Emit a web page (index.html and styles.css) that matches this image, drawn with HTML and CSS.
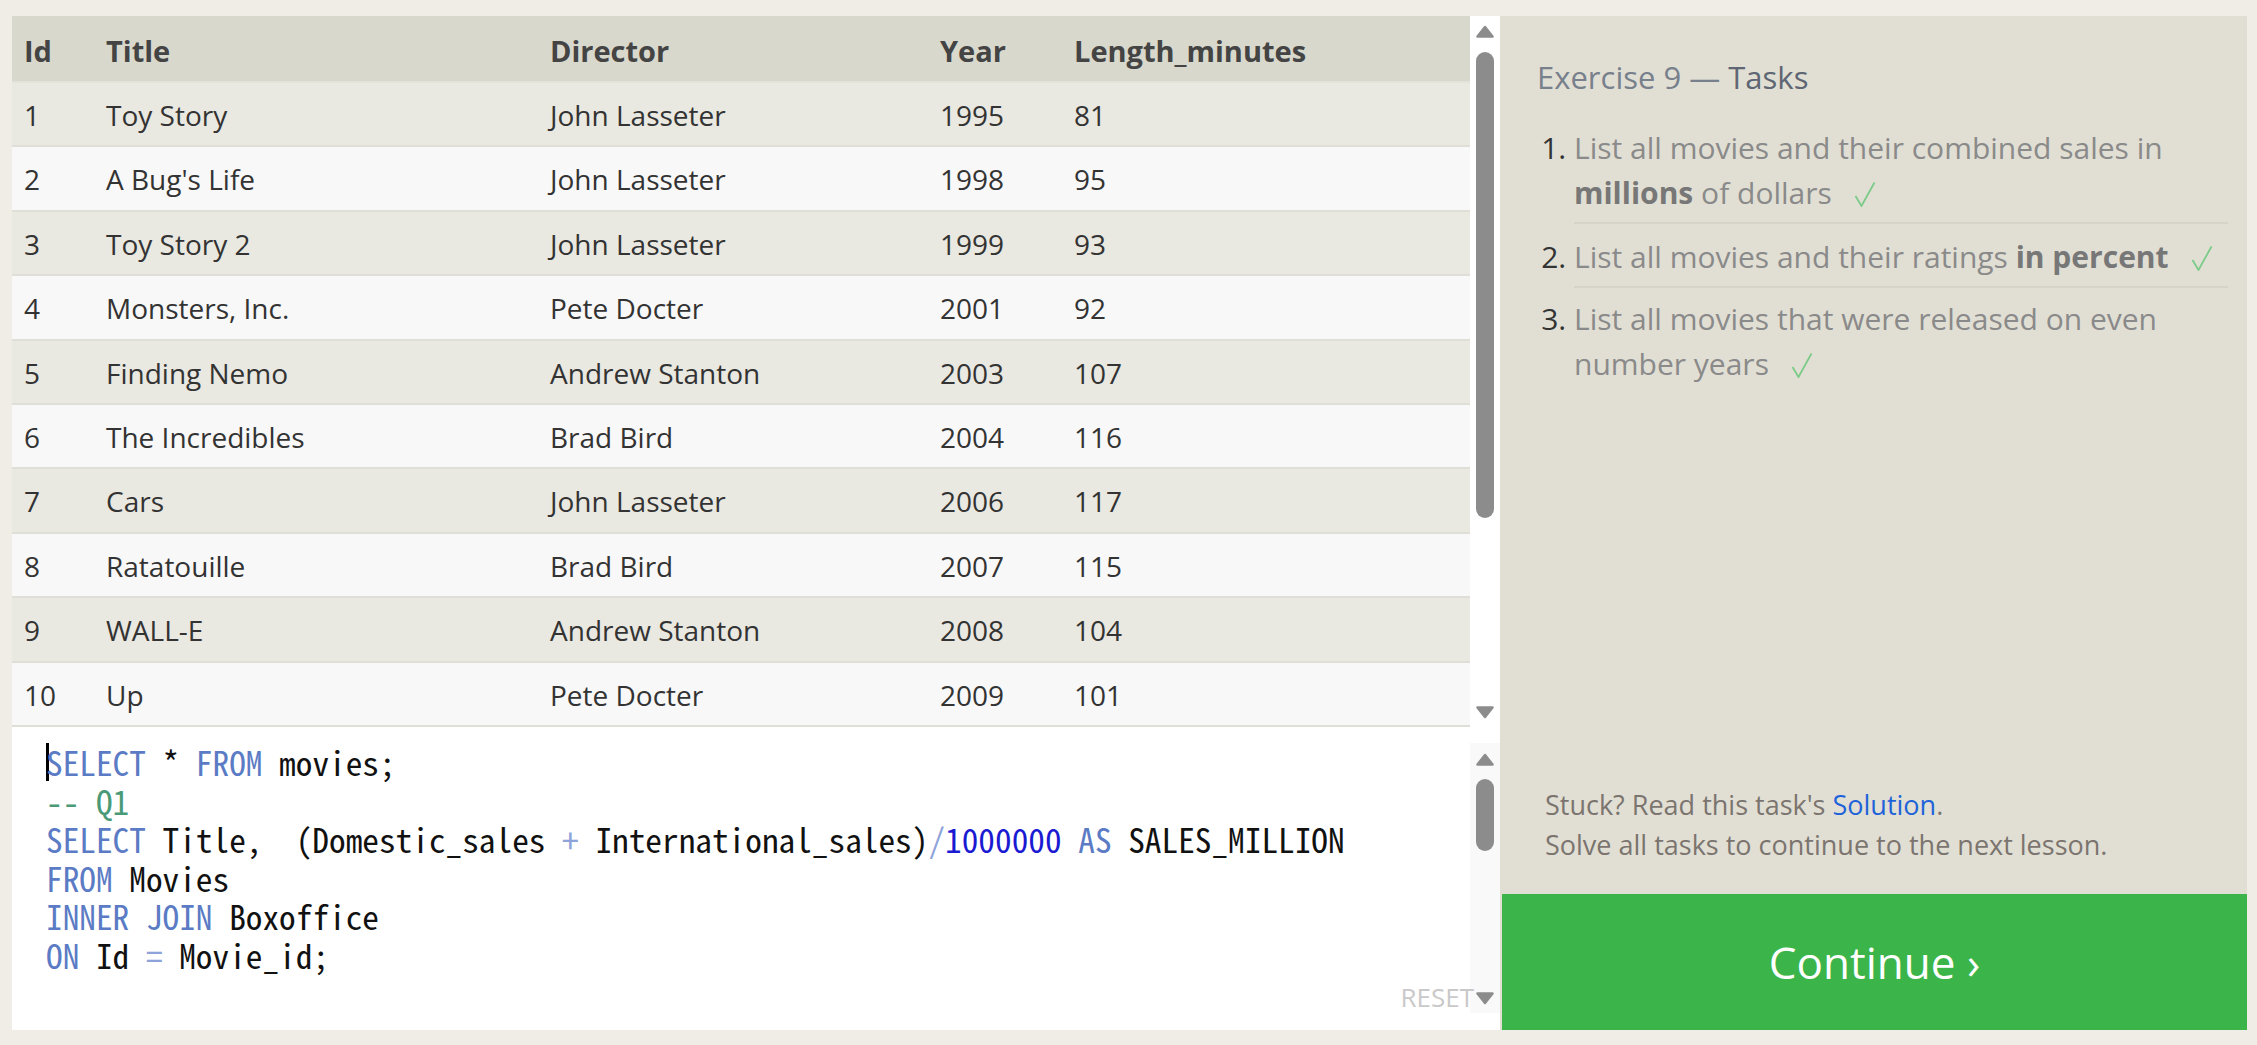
FILE: index.html
```html
<!DOCTYPE html>
<html lang="en">
<head>
<meta charset="utf-8">
<title>SQL Exercise 9 — Tasks</title>
<link rel="stylesheet" href="styles.css">
</head>
<body>
<div class="app">
  <div class="left">
    <div class="results">
      <table class="grid">
        <colgroup>
          <col class="c-id"><col class="c-title"><col class="c-dir"><col class="c-year"><col class="c-len">
        </colgroup>
        <thead>
          <tr><th>Id</th><th>Title</th><th>Director</th><th>Year</th><th>Length_minutes</th></tr>
        </thead>
        <tbody>
          <tr><td>1</td><td>Toy Story</td><td>John Lasseter</td><td>1995</td><td>81</td></tr>
          <tr><td>2</td><td>A Bug's Life</td><td>John Lasseter</td><td>1998</td><td>95</td></tr>
          <tr><td>3</td><td>Toy Story 2</td><td>John Lasseter</td><td>1999</td><td>93</td></tr>
          <tr><td>4</td><td>Monsters, Inc.</td><td>Pete Docter</td><td>2001</td><td>92</td></tr>
          <tr><td>5</td><td>Finding Nemo</td><td>Andrew Stanton</td><td>2003</td><td>107</td></tr>
          <tr><td>6</td><td>The Incredibles</td><td>Brad Bird</td><td>2004</td><td>116</td></tr>
          <tr><td>7</td><td>Cars</td><td>John Lasseter</td><td>2006</td><td>117</td></tr>
          <tr><td>8</td><td>Ratatouille</td><td>Brad Bird</td><td>2007</td><td>115</td></tr>
          <tr><td>9</td><td>WALL-E</td><td>Andrew Stanton</td><td>2008</td><td>104</td></tr>
          <tr><td>10</td><td>Up</td><td>Pete Docter</td><td>2009</td><td>101</td></tr>
        </tbody>
      </table>
      <div class="vscroll results-scroll">
        <svg class="arrow" viewBox="0 0 18 13" width="18" height="13"><path d="M9 2 L16.5 11.5 H1.5 Z"/></svg>
        <div class="thumb results-thumb"></div>
        <div class="spacer"></div>
        <svg class="arrow" viewBox="0 0 18 13" width="18" height="13"><path d="M9 11 L16.5 1.5 H1.5 Z"/></svg>
      </div>
    </div>
    <div class="editor">
<pre class="code"><span class="caret"></span><span class="kw">SELECT</span> * <span class="kw">FROM</span> movies;
<span class="cm">-- Q1</span>
<span class="kw">SELECT</span> Title,  (Domestic_sales <span class="op">+</span> International_sales)<span class="op">/</span><span class="num">1000000</span> <span class="kw">AS</span> SALES_MILLION
<span class="kw">FROM</span> Movies
<span class="kw">INNER</span> <span class="kw">JOIN</span> Boxoffice
<span class="kw">ON</span> Id <span class="op">=</span> Movie_id;</pre>
      <div class="reset">RESET</div>
      <div class="vscroll editor-scroll">
        <svg class="arrow" viewBox="0 0 18 13" width="18" height="13"><path d="M9 2 L16.5 11.5 H1.5 Z"/></svg>
        <div class="thumb editor-thumb"></div>
        <div class="spacer"></div>
        <svg class="arrow" viewBox="0 0 18 13" width="18" height="13"><path d="M9 11 L16.5 1.5 H1.5 Z"/></svg>
      </div>
    </div>
  </div>
  <aside class="panel">
    <div class="tasks">
      <h2 class="heading">Exercise 9 — <span class="heading-strong">Tasks</span></h2>
      <ol class="task-list">
        <li>List all movies and their combined sales in <b>millions</b> of dollars<svg class="check" viewBox="0 0 22 26" width="22" height="26"><path d="M1.5 15 L7.5 25 L20.5 1.5"/></svg></li>
        <li>List all movies and their ratings <b>in percent</b><svg class="check" viewBox="0 0 22 26" width="22" height="26"><path d="M1.5 15 L7.5 25 L20.5 1.5"/></svg></li>
        <li>List all movies that were released on even number years<svg class="check" viewBox="0 0 22 26" width="22" height="26"><path d="M1.5 15 L7.5 25 L20.5 1.5"/></svg></li>
      </ol>
    </div>
    <div class="hint">
      <p>Stuck? Read this task's <a href="#">Solution</a>.</p>
      <p>Solve all tasks to continue to the next lesson.</p>
    </div>
    <div class="continue">Continue ›</div>
  </aside>
</div>
</body>
</html>
```
FILE: styles.css
```css
html, body {
  margin: 0;
  padding: 0;
}

body {
  background: #efede6;
  font-family: "Open Sans", "Noto Sans", sans-serif;
}

.app {
  display: flex;
  box-sizing: border-box;
  height: 1045px;
  padding: 16px 10px 15px 12px;
}

/* ---------- left column ---------- */
.left {
  width: 1488px;
  display: flex;
  flex-direction: column;
}

.results {
  display: flex;
}

.grid {
  width: 1458px;
  border-collapse: collapse;
  table-layout: fixed;
  font-size: 28px;
  color: #333;
}

.c-id { width: 82px; }
.c-title { width: 444px; }
.c-dir { width: 390px; }
.c-year { width: 134px; }
.c-len { width: 408px; }

.grid th {
  background: #d9d8cc;
  color: #444;
  font-size: 29px;
  font-weight: 700;
  text-align: left;
  padding: 5px 0 0 12px;
  line-height: 60px;
  border-bottom: 2px solid #e3e2db;
  white-space: nowrap;
}

.grid td {
  padding: 3px 0 0 12px;
  line-height: 59.4px;
  border-bottom: 2px solid #dfded7;
  white-space: nowrap;
}

.grid tbody tr:nth-child(odd) td { background: #e9e8e1; }
.grid tbody tr:nth-child(even) td { background: #f8f8f8; }

.vscroll {
  width: 30px;
  display: flex;
  flex-direction: column;
  align-items: center;
}

.vscroll .arrow path {
  fill: #8c8c8c;
  stroke: #8c8c8c;
  stroke-width: 2.5;
  stroke-linejoin: round;
}

.spacer { flex: 1; }

.thumb {
  width: 18px;
  border-radius: 9px;
  background: #8c8c8c;
}

.results-scroll {
  background: #fff;
  padding: 9px 0 8px;
}

.results-thumb {
  height: 466px;
  margin-top: 14px;
}

.editor {
  flex: 1;
  display: flex;
  background: #fff;
  position: relative;
}

.code {
  flex: 1;
  margin: 0;
  padding: 16px 0 0 34px;
  font-family: "Noto Sans Mono CJK SC", "Noto Sans Mono CJK JP", "Liberation Mono", monospace;
  font-size: 33.3px;
  line-height: 38.5px;
  color: #111;
  white-space: pre;
}

.caret {
  display: inline-block;
  width: 0;
  height: 38px;
  border-left: 3px solid #000;
  margin-right: -3px;
  vertical-align: top;
}

.kw { color: #5b7bc5; }
.cm { color: #4a9a78; }
.num { color: #1a1ad2; }
.op { color: #8ea3d9; }

.reset {
  position: absolute;
  right: 26px;
  bottom: 20px;
  font-size: 26px;
  line-height: 26px;
  color: #c9c9c9;
}

.editor-scroll {
  background: #f9f9f9;
  margin: 16px 0 17px;
  padding: 10px 0 8px;
}

.editor-thumb {
  height: 72px;
  margin-top: 13px;
}

/* ---------- right panel ---------- */
.panel {
  width: 747px;
  background: #e1dfd4;
  display: flex;
  flex-direction: column;
}

.tasks {
  flex: 1;
  padding: 38px 19px 0 37px;
}

.heading {
  margin: 0;
  font-size: 31px;
  font-weight: 400;
  line-height: 46px;
  color: #78808c;
}

.heading-strong {
  color: #5e6673;
}

.task-list {
  margin: 15px 0 0;
  padding-left: 37px;
  font-size: 30px;
  line-height: 45px;
  color: #8a8a8a;
}

.task-list li {
  padding: 10px 0 7px;
  border-bottom: 2px solid #d6d4c9;
}

.task-list li:last-child {
  border-bottom: none;
  padding-top: 8px;
}

.task-list li::marker {
  color: #333;
}

.task-list b {
  color: #777;
  font-weight: 700;
}

.check {
  margin-left: 22px;
  vertical-align: -3px;
}

.check path {
  fill: none;
  stroke: #7ccb88;
  stroke-width: 1.8;
}

.hint {
  padding: 0 37px 29px 45px;
  font-size: 27px;
  line-height: 40px;
  color: #7b746f;
}

.hint p {
  margin: 0;
}

.hint a {
  color: #1f63d9;
  text-decoration: none;
}

.continue {
  height: 136px;
  margin-left: 2px;
  background: #3bb54a;
  color: #fff;
  font-size: 44px;
  display: flex;
  align-items: center;
  justify-content: center;
}
```
